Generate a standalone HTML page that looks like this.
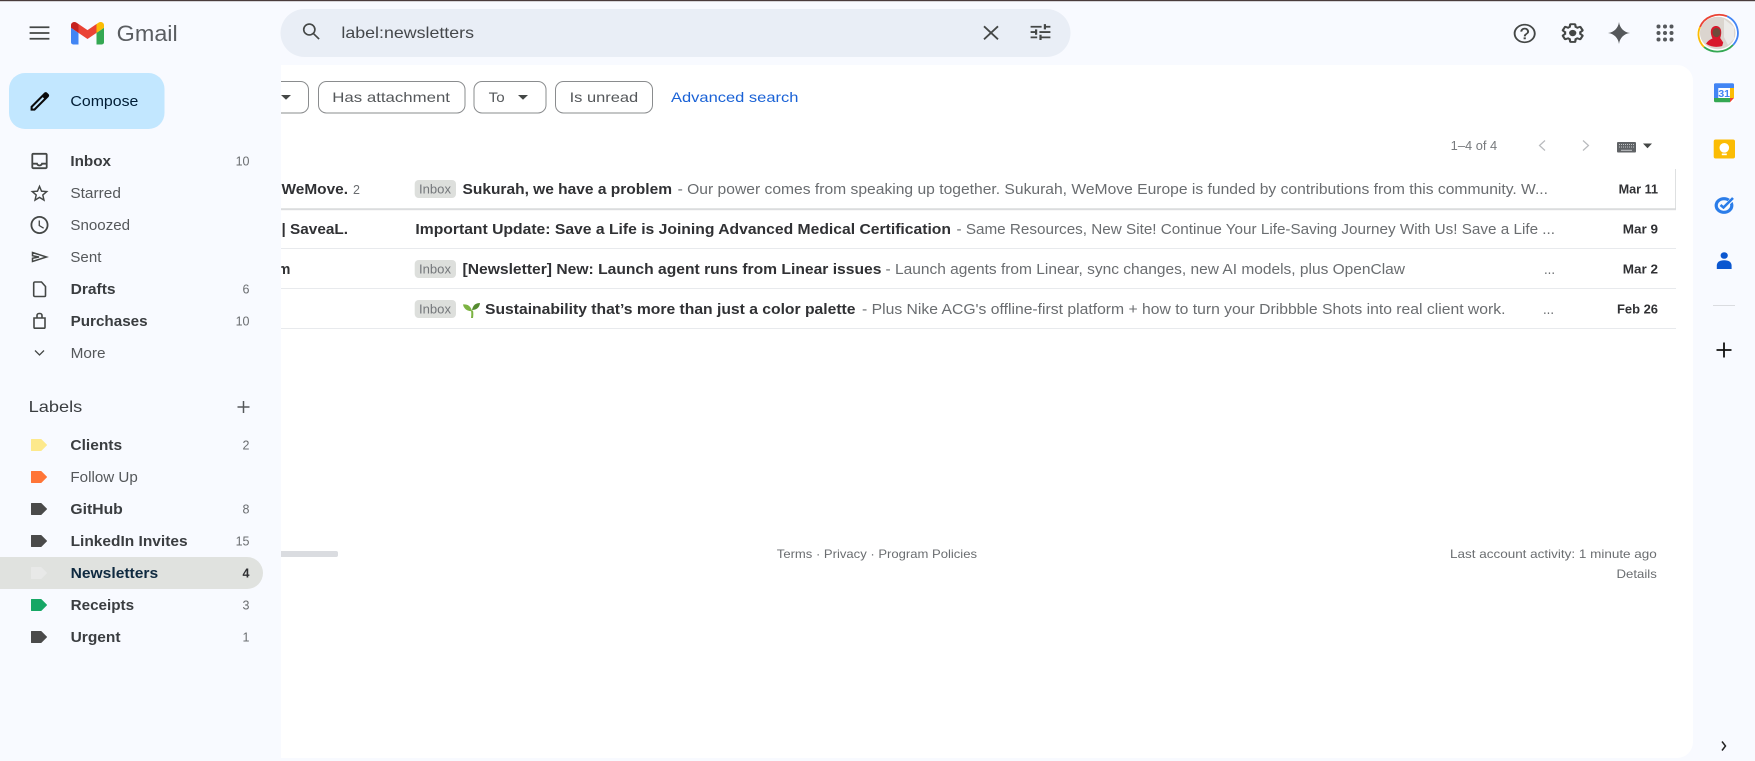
<!DOCTYPE html>
<html lang="en">
<head>
<meta charset="utf-8">
<title>Gmail - label:newsletters</title>
<style>
html,body{margin:0;padding:0;width:1755px;height:761px;overflow:hidden;background:#f8faff}
svg{display:block;position:absolute;left:0;top:0}
text{font-family:"Liberation Sans",sans-serif;white-space:pre}
.b{font-size:14.5px;font-weight:700;fill:#303134}
.sn{font-size:14.5px;fill:#6a6d70}
.nav{font-size:14.5px;fill:#55585b}
.navb{font-size:14.5px;font-weight:700;fill:#3a3d40}
.cnt{font-size:12.5px;fill:#6a6d70;text-anchor:end}
.date{font-size:12.5px;font-weight:700;fill:#303134}
.chip{font-size:14px;fill:#55585b}
.foot{font-size:12px;fill:#6a6d70}
.ic{fill:#444746}
.st{fill:none;stroke:#444746;stroke-width:1.800}
</style>
</head>
<body>
<svg width="1755" height="761" viewBox="0 0 1755 761" xmlns="http://www.w3.org/2000/svg">
  <rect width="1755" height="761" fill="#f8faff"/>
  <rect width="1755" height="1.2" fill="#4a3c3c"/>

  <!-- main panel -->
  <path d="M260 65H1677a16 16 0 0 1 16 16V742a16 16 0 0 1-16 16H260z" fill="#fff"/>

  <!-- filter chips -->
  <g fill="none" stroke="#8a8c8e" stroke-width="1">
    <rect x="220" y="81.5" width="88.5" height="31.5" rx="8"/>
    <rect x="318.5" y="81.5" width="146.5" height="31.5" rx="8"/>
    <rect x="474" y="81.5" width="72" height="31.5" rx="8"/>
    <rect x="555.5" y="81.5" width="97" height="31.5" rx="8"/>
  </g>
  <path d="M281 95h10l-5 4.800z" fill="#444746"/>
  <path d="M518 95h10l-5 4.800z" fill="#444746"/>
  <text class="chip" x="332.3" y="102" textLength="117.7" lengthAdjust="spacingAndGlyphs">Has attachment</text>
  <text class="chip" x="488.7" y="102" textLength="16" lengthAdjust="spacingAndGlyphs">To</text>
  <text class="chip" x="569.6" y="102" textLength="68.6" lengthAdjust="spacingAndGlyphs">Is unread</text>
  <text class="chip" x="671" y="102" textLength="127.4" lengthAdjust="spacingAndGlyphs" style="fill:#1a62d6">Advanced search</text>

  <!-- pagination -->
  <text x="1450.7" y="150" textLength="46.5" lengthAdjust="spacingAndGlyphs" style="font-size:12.5px;fill:#777a7d">1–4 of 4</text>
  <path d="M1545 140.500l-5.500 5 5.500 5M1583 140.500l5.500 5-5.500 5" fill="none" stroke="#b8babd" stroke-width="1.200"/>
  <rect x="1617" y="142" width="19" height="10.500" rx="1" fill="#606366"/>
  <path d="M1619 144.500h15M1619 147h15" stroke="#c5c7c9" stroke-width="1" stroke-dasharray="1 1"/>
  <path d="M1621 150.300h11" stroke="#c5c7c9" stroke-width="1"/>
  <path d="M1643 143.500h9l-4.500 4.700z" fill="#444746"/>

  <!-- rows -->
  <g>
    <rect x="281" y="169" width="1394.500" height="40" fill="#fff"/>
    <rect x="281" y="208.500" width="1395" height="1" fill="#c6c8ca"/>
    <rect x="281" y="209.500" width="1395" height="1" fill="#f0f1f1"/>
    <rect x="1675.200" y="169" width=".8" height="40" fill="#d6d8da"/>
    <rect x="281" y="248" width="1395" height="1" fill="#e8eaed"/>
    <rect x="281" y="288" width="1395" height="1" fill="#e8eaed"/>
    <rect x="281" y="328" width="1395" height="1" fill="#e8eaed"/>
  </g>

  <text class="b" x="281.5" y="194" textLength="66.5" lengthAdjust="spacingAndGlyphs">WeMove.</text>
  <text x="353" y="194" style="font-size:12.5px;fill:#6a6d70">2</text>
  <rect x="414.7" y="180" width="41.3" height="18" rx="4" fill="#dddfdc"/>
  <text x="419" y="193.5" textLength="32" lengthAdjust="spacingAndGlyphs" style="font-size:12.5px;fill:#73767a">Inbox</text>
  <text class="b" x="462.5" y="194" textLength="209.5" lengthAdjust="spacingAndGlyphs">Sukurah, we have a problem</text>
  <text class="sn" x="677.6" y="194" textLength="870.4" lengthAdjust="spacingAndGlyphs">- Our power comes from speaking up together. Sukurah, WeMove Europe is funded by contributions from this community. W...</text>
  <text class="date" x="1618.6" y="193.5" textLength="39.4" lengthAdjust="spacingAndGlyphs">Mar 11</text>

  <text class="b" x="281.5" y="234" textLength="66.5" lengthAdjust="spacingAndGlyphs">| SaveaL.</text>
  <text class="b" x="415.4" y="234" textLength="535.6" lengthAdjust="spacingAndGlyphs">Important Update: Save a Life is Joining Advanced Medical Certification</text>
  <text class="sn" x="956.5" y="234" textLength="598.5" lengthAdjust="spacingAndGlyphs">- Same Resources, New Site! Continue Your Life-Saving Journey With Us! Save a Life ...</text>
  <text class="date" x="1622.8" y="233.5" textLength="35.2" lengthAdjust="spacingAndGlyphs">Mar 9</text>

  <text class="b" x="277.5" y="274">m</text>
  <rect x="414.7" y="260" width="41.3" height="18" rx="4" fill="#dddfdc"/>
  <text x="419" y="273.5" textLength="32" lengthAdjust="spacingAndGlyphs" style="font-size:12.5px;fill:#73767a">Inbox</text>
  <text class="b" x="462.5" y="274" textLength="418.9" lengthAdjust="spacingAndGlyphs">[Newsletter] New: Launch agent runs from Linear issues</text>
  <text class="sn" x="885.5" y="274" textLength="519.5" lengthAdjust="spacingAndGlyphs">- Launch agents from Linear, sync changes, new AI models, plus OpenClaw</text>
  <text class="sn" x="1544" y="274" textLength="11" lengthAdjust="spacingAndGlyphs">...</text>
  <text class="date" x="1622.8" y="273.5" textLength="35.2" lengthAdjust="spacingAndGlyphs">Mar 2</text>

  <rect x="414.7" y="300" width="41.3" height="18" rx="4" fill="#dddfdc"/>
  <text x="419" y="313.5" textLength="32" lengthAdjust="spacingAndGlyphs" style="font-size:12.5px;fill:#73767a">Inbox</text>
  <g>
    <path d="M471 318c.4-3 .4-5 0-7.500h2c.5 2.500.4 5 0 7.500z" fill="#7cb342"/>
    <path d="M463 304.500c4-.5 7.500 1 9 6.500-4 .5-8-1.500-9-6.500z" fill="#7cb342"/>
    <path d="M480 303c-4 0-7 1.800-8 7 4 0 7.500-2 8-7z" fill="#558b2f"/>
  </g>
  <text class="b" x="485" y="314" textLength="370.500" lengthAdjust="spacingAndGlyphs">Sustainability that’s more than just a color palette</text>
  <text class="sn" x="862" y="314" textLength="643.500" lengthAdjust="spacingAndGlyphs">- Plus Nike ACG's offline-first platform + how to turn your Dribbble Shots into real client work.</text>
  <text class="sn" x="1543" y="314" textLength="11" lengthAdjust="spacingAndGlyphs">...</text>
  <text class="date" x="1617" y="313.5" textLength="41" lengthAdjust="spacingAndGlyphs">Feb 26</text>

  <!-- footer -->
  <rect x="270" y="551" width="68" height="6" rx="2" fill="#dadce0"/>
  <text class="foot" x="776.8" y="558" textLength="200.2" lengthAdjust="spacingAndGlyphs">Terms · Privacy · Program Policies</text>
  <text class="foot" x="1450" y="558" textLength="206.8" lengthAdjust="spacingAndGlyphs">Last account activity: 1 minute ago</text>
  <text class="foot" x="1616.5" y="578" textLength="40.3" lengthAdjust="spacingAndGlyphs">Details</text>

  <!-- sidebar -->
  <rect x="0" y="58" width="281" height="703" fill="#f8faff"/>
  <path d="M0 557H247a16 16 0 0 1 0 32H0z" fill="#e0e2df"/>

  <!-- header left -->
  <g transform="translate(26.3 19.8) scale(1.1)"><path class="ic" d="M3 18h18v-1.600H3v1.600zm0-5.200h18v-1.600H3v1.600zM3 6v1.600h18V6H3z"/></g>
  <g transform="translate(71 22) scale(.375 .34) translate(-52 -42)">
    <path fill="#4285f4" d="M58 108h14V74L52 59v43c0 3.320 2.690 6 6 6"/>
    <path fill="#34a853" d="M120 108h14c3.320 0 6-2.690 6-6V59l-20 15"/>
    <path fill="#fbbc04" d="M120 48v26l20-15v-8c0-7.420-8.470-11.650-14.400-7.200"/>
    <path fill="#ea4335" d="M72 74V48l24 18 24-18v26L96 92"/>
    <path fill="#c5221f" d="M52 51v8l20 15V48l-5.600-4.200c-5.940-4.450-14.400-.22-14.400 7.200"/>
  </g>
  <text x="116.7" y="41" textLength="61" lengthAdjust="spacingAndGlyphs" style="font-size:22px;fill:#5a5d61">Gmail</text>

  <!-- search -->
  <rect x="280.5" y="9" width="790" height="48" rx="24" fill="#e9eef6"/>
  <g transform="translate(300 20.500) scale(.98 .95)"><path d="M9.500 3.800a5.700 5.700 0 1 0 0 11.400 5.700 5.700 0 0 0 0-11.400zM13.700 13.700l5.800 5.800" fill="none" stroke="#444746" stroke-width="1.700"/></g>
  <text x="341.4" y="38" textLength="132.600" lengthAdjust="spacingAndGlyphs" style="font-size:16px;fill:#44474a">label:newsletters</text>
  <path d="M984 26.300l14 13M998 26.300l-14 13" fill="none" stroke="#444746" stroke-width="1.800"/>
  <g transform="translate(1027.300 21.500) scale(1.100 .88)"><path class="ic" d="M3 17v2h6v-2H3zM3 5v2h10V5H3zm10 16v-2h8v-2h-8v-2h-2v6h2zM7 9v2H3v2h4v2h2V9H7zm14 4v-2H11v2h10zm-6-4h2V7h4V5h-4V3h-2v6z"/></g>

  <!-- header right -->
  <g transform="translate(1511.500 22) scale(1.100 .96)"><path class="ic" d="M11 18h2v-2h-2v2zm1-16C6.480 2 2 6.480 2 12s4.480 10 10 10 10-4.480 10-10S17.520 2 12 2zm0 18.300c-4.580 0-8.300-3.720-8.300-8.300S7.420 3.700 12 3.700s8.300 3.720 8.300 8.300-3.720 8.300-8.300 8.300zM12 6c-2.210 0-4 1.790-4 4h1.800c0-1.200 1-2.200 2.200-2.200s2.200 1 2.200 2.200c0 2-3 1.750-3 5h1.800c0-2.250 3-2.500 3-5 0-2.210-1.790-4-4-4z"/></g>
  <g transform="translate(1559.500 21.500) scale(1.100 .96)">
    <path class="ic" d="M13.850 22.250h-3.700c-.74 0-1.360-.54-1.450-1.270l-.27-1.890c-.27-.14-.53-.29-.79-.46l-1.800.72c-.7.260-1.470-.03-1.810-.65L2.200 15.530c-.35-.66-.2-1.440.36-1.880l1.530-1.190c-.01-.15-.02-.3-.02-.46 0-.15.01-.31.02-.46l-1.520-1.190c-.59-.45-.74-1.260-.37-1.880l1.850-3.190c.34-.62 1.110-.9 1.790-.63l1.810.73c.26-.17.520-.32.780-.46l.27-1.910c.09-.7.710-1.250 1.440-1.250h3.700c.74 0 1.360.54 1.450 1.270l.27 1.890c.27.140.53.290.79.460l1.800-.72c.71-.26 1.480.03 1.820.65l1.840 3.180c.36.660.2 1.440-.36 1.880l-1.520 1.190c.01.150.02.300.02.460s-.01.310-.02.460l1.520 1.190c.56.450.72 1.230.37 1.860l-1.860 3.220c-.34.620-1.110.9-1.800.63l-1.800-.72c-.26.170-.52.320-.78.460l-.27 1.910c-.1.680-.72 1.220-1.460 1.220zm-3.230-2h2.760l.37-2.550.53-.22c.44-.18.880-.44 1.340-.78l.45-.34 2.380.96 1.380-2.400-2.030-1.580.07-.56c.03-.26.060-.51.060-.78s-.03-.53-.06-.78l-.07-.56 2.030-1.580-1.390-2.400-2.390.96-.45-.35c-.42-.32-.87-.58-1.330-.77l-.52-.22-.37-2.550h-2.760l-.37 2.550-.53.21c-.44.190-.88.440-1.340.790l-.45.330-2.380-.95-1.390 2.390 2.030 1.580-.07.56a7 7 0 0 0-.06.790c0 .260.020.530.060.780l.07.56-2.030 1.580 1.380 2.400 2.390-.96.45.35c.43.330.86.580 1.330.770l.53.220.38 2.550z"/>
    <circle class="ic" cx="12" cy="12" r="3.300"/>
  </g>
  <path d="M1619 22C1619.700 28 1624 32.300 1630 33C1624 33.700 1619.700 38 1619 44C1618.300 38 1614 33.700 1608 33C1614 32.300 1618.300 28 1619 22Z" fill="#55585b"/>
  <g fill="#55585b">
    <circle cx="1658.500" cy="26.500" r="2"/><circle cx="1665" cy="26.500" r="2"/><circle cx="1671.500" cy="26.500" r="2"/>
    <circle cx="1658.500" cy="33" r="2"/><circle cx="1665" cy="33" r="2"/><circle cx="1671.500" cy="33" r="2"/>
    <circle cx="1658.500" cy="39.500" r="2"/><circle cx="1665" cy="39.500" r="2"/><circle cx="1671.500" cy="39.500" r="2"/>
  </g>

  <!-- avatar -->
  <g>
    <ellipse cx="1717.700" cy="33" rx="20.500" ry="18.800" fill="#fff"/>
    <path d="M1700 27A20.500 18.800 0 0 1 1727 16.200" fill="none" stroke="#ea4335" stroke-width="1.800"/>
    <path d="M1727 16.200A20.500 18.800 0 0 1 1733 45" fill="none" stroke="#4285f4" stroke-width="1.800"/>
    <path d="M1733 45A20.500 18.800 0 0 1 1704 47" fill="none" stroke="#34a853" stroke-width="1.800"/>
    <path d="M1704 47A20.500 18.800 0 0 1 1700 27" fill="none" stroke="#fbbc04" stroke-width="1.800"/>
    <ellipse cx="1717.700" cy="33" rx="17.800" ry="16.300" fill="#dbd5cf"/>
    <path d="M1724 19l10 8v12l-6 6-4-8z" fill="#ecebe9"/>
    <path d="M1706 44c1.500-3 4-4.500 6.500-5.500-1.500-3-2-6-1.500-8.500.8-2.700 2.800-4 5-4s4.200 1.300 5 4c.5 2.500.2 5.500-.8 8l3 4.500-1 3.500c-5.500 1.500-11.200 1-15.700-2z" fill="#d8182c"/>
    <ellipse cx="1716.500" cy="32.500" rx="4" ry="4.600" fill="#6d4b3a"/>
  </g>

  <!-- compose -->
  <rect x="9" y="73" width="155.500" height="56" rx="16" fill="#c2e7ff"/>
  <g transform="translate(27.5 89) scale(1.030)"><path d="M20.410 4.940L19.060 3.590a2 2 0 0 0-2.830 0L3 16.830V21h4.170L20.410 7.770a2 2 0 0 0 0-2.830zM6.300 19H5v-1.300L14.800 7.900l1.300 1.300z" fill="#0a0a0a"/></g>
  <text x="70.4" y="106" textLength="68" lengthAdjust="spacingAndGlyphs" style="font-size:14.5px;fill:#001d35">Compose</text>

  <!-- nav icons -->
  <g transform="translate(28.700 150.200) scale(.9)"><path class="ic" d="M19 3H5c-1.100 0-2 .9-2 2v14c0 1.100.9 2 2 2h14c1.100 0 2-.9 2-2V5c0-1.100-.9-2-2-2zm0 16H5v-3h3.560c.69 1.190 1.970 2 3.440 2s2.750-.81 3.440-2H19v3zm0-5h-4.990c0 1.100-.9 2-2 2s-2-.9-2-2H5V5h14v9z"/></g>
  <g transform="translate(28.700 182.700) scale(.9)"><path class="ic" d="M22 9.240l-7.190-.62L12 2 9.190 8.630 2 9.240l5.460 4.730L5.820 21 12 17.270 18.180 21l-1.630-7.030L22 9.240zM12 15.400l-3.760 2.270 1-4.280-3.320-2.880 4.380-.38L12 6.100l1.710 4.040 4.380.38-3.320 2.880 1 4.280L12 15.400z"/></g>
  <g transform="translate(28.700 214.200) scale(.9)"><path class="ic" d="M11.990 2C6.470 2 2 6.480 2 12s4.470 10 9.990 10C17.520 22 22 17.520 22 12S17.520 2 11.990 2zM12 20c-4.420 0-8-3.580-8-8s3.580-8 8-8 8 3.580 8 8-3.580 8-8 8zm.5-13H11v6l5.250 3.150.75-1.230-4.500-2.670z"/></g>
  <path class="st" d="M32.500 252.500l14 4.500-14 4.500v-3.300l6.500-1.200-6.500-1.200z" style="stroke-width:1.500"/>
  <path class="st" d="M35 282h6.500l4 4.500v9a1 1 0 0 1-1 1h-9.500a1.300 1.300 0 0 1-1.300-1v-12.300a1.300 1.300 0 0 1 1.300-1.200z" style="stroke-width:1.600"/>
  <path class="st" d="M34 318h11v9.200a1 1 0 0 1-1 1h-9a1 1 0 0 1-1-1zM37 318v-2.500a2 2 0 0 1 2-2h1a2 2 0 0 1 2 2v2.500" style="stroke-width:1.600"/>
  <path d="M35 350.500l4.500 4.500 4.500-4.500" fill="none" stroke="#444746" stroke-width="1.300"/>

  <!-- nav text -->
  <text class="navb" x="70.400" y="166" textLength="40.600" lengthAdjust="spacingAndGlyphs">Inbox</text>
  <text class="cnt" x="249.500" y="165.500">10</text>
  <text class="nav" x="70.400" y="198" textLength="50.500" lengthAdjust="spacingAndGlyphs">Starred</text>
  <text class="nav" x="70.400" y="230" textLength="59.700" lengthAdjust="spacingAndGlyphs">Snoozed</text>
  <text class="nav" x="70.400" y="262" textLength="31" lengthAdjust="spacingAndGlyphs">Sent</text>
  <text class="navb" x="70.600" y="294" textLength="45" lengthAdjust="spacingAndGlyphs">Drafts</text>
  <text class="cnt" x="249.500" y="293.500">6</text>
  <text class="navb" x="70.600" y="326" textLength="77" lengthAdjust="spacingAndGlyphs">Purchases</text>
  <text class="cnt" x="249.500" y="325.500">10</text>
  <text class="nav" x="70.600" y="358" textLength="35" lengthAdjust="spacingAndGlyphs">More</text>

  <!-- labels -->
  <text x="28.700" y="412" textLength="53.600" lengthAdjust="spacingAndGlyphs" style="font-size:16px;fill:#3a3d40">Labels</text>
  <path d="M243.500 401v12M237.500 407h12" stroke="#55585b" stroke-width="1.500" fill="none"/>

  <g stroke-width="1" stroke-linejoin="round">
    <path d="M31.500 439.500h9.500l5.500 5.500-5.500 5.500h-9.500z" fill="#fde98c" stroke="#fde98c"/>
    <path d="M31.500 471.500h9.500l5.500 5.500-5.500 5.500h-9.500z" fill="#ff7537" stroke="#ff7537"/>
    <path d="M31.500 503.500h9.500l5.500 5.500-5.500 5.500h-9.500z" fill="#4a4a4a" stroke="#4a4a4a"/>
    <path d="M31.500 535.500h9.500l5.500 5.500-5.500 5.500h-9.500z" fill="#4a4a4a" stroke="#4a4a4a"/>
    <path d="M31.500 567.500h9.500l5.500 5.500-5.500 5.500h-9.500z" fill="#e8e9e8" stroke="#e8e9e8"/>
    <path d="M31.500 599.500h9.500l5.500 5.500-5.500 5.500h-9.500z" fill="#16a765" stroke="#16a765"/>
    <path d="M31.500 631.500h9.500l5.500 5.500-5.500 5.500h-9.500z" fill="#4a4a4a" stroke="#4a4a4a"/>
  </g>

  <text class="navb" x="70.400" y="450" textLength="51.700" lengthAdjust="spacingAndGlyphs">Clients</text>
  <text class="cnt" x="249.500" y="449.500">2</text>
  <text class="nav" x="70.400" y="482" textLength="67.400" lengthAdjust="spacingAndGlyphs">Follow Up</text>
  <text class="navb" x="70.400" y="514" textLength="52.400" lengthAdjust="spacingAndGlyphs">GitHub</text>
  <text class="cnt" x="249.500" y="513.500">8</text>
  <text class="navb" x="70.600" y="546" textLength="117" lengthAdjust="spacingAndGlyphs">LinkedIn Invites</text>
  <text class="cnt" x="249.500" y="545.500">15</text>
  <text class="navb" x="70.600" y="578" textLength="87.600" lengthAdjust="spacingAndGlyphs" style="fill:#0f2a40">Newsletters</text>
  <text class="cnt" x="249.500" y="577.500" style="font-weight:700;fill:#303134">4</text>
  <text class="navb" x="70.600" y="610" textLength="63.500" lengthAdjust="spacingAndGlyphs">Receipts</text>
  <text class="cnt" x="249.500" y="609.500">3</text>
  <text class="navb" x="70.600" y="642" textLength="50" lengthAdjust="spacingAndGlyphs">Urgent</text>
  <text class="cnt" x="249.500" y="641.500">1</text>

  <!-- right side panel -->
  <g>
    <rect x="1714" y="83.300" width="20" height="19" rx="1.500" fill="#fff"/>
    <path d="M1715.500 83.300h17a1.500 1.500 0 0 1 1.500 1.500v3.200h-20v-3.200a1.500 1.500 0 0 1 1.500-1.500z" fill="#4285f4"/>
    <rect x="1714" y="84" width="4.300" height="15" fill="#4285f4"/>
    <rect x="1730" y="88" width="4" height="10" fill="#fbbc04"/>
    <path d="M1714 98h16v4.300h-14.500a1.500 1.500 0 0 1-1.500-1.500z" fill="#34a853"/>
    <path d="M1730 98h4l-4 4.300z" fill="#ea4335"/>
    <text x="1724.200" y="97" text-anchor="middle" style="font-size:10.500px;font-weight:700;fill:#4285f4">31</text>
  </g>
  <g>
    <rect x="1713.700" y="139.500" width="21.300" height="19" rx="2" fill="#fbbc04"/>
    <circle cx="1724.300" cy="147.800" r="4.800" fill="#fff"/>
    <rect x="1721.800" y="153.500" width="5" height="1.700" fill="#fff"/>
  </g>
  <g fill="none">
    <ellipse cx="1724" cy="205.500" rx="7.800" ry="6.800" stroke="#2b7de9" stroke-width="3.200"/>
    <path d="M1720.500 205.500l3 2.500 8.500-8.500" stroke="#fff" stroke-width="4"/>
    <path d="M1720.500 205l3 2.500 9.500-9.500" stroke="#2b7de9" stroke-width="2.600"/>
  </g>
  <g fill="#0b57d0">
    <ellipse cx="1724.200" cy="255.500" rx="3.600" ry="3.300"/>
    <path d="M1716.800 269v-3.500c0-3.300 2.800-5.300 7.400-5.300s7.400 2 7.400 5.300v3.500z"/>
  </g>
  <rect x="1713" y="305" width="22" height="1" fill="#dadce0"/>
  <path d="M1724 342.500v15M1716.500 350h15" stroke="#111" stroke-width="1.800" fill="none"/>
  <path d="M1722 741.500l3.500 4.500-3.500 4.500" fill="none" stroke="#222" stroke-width="1.500"/>
</svg>
</body>
</html>
